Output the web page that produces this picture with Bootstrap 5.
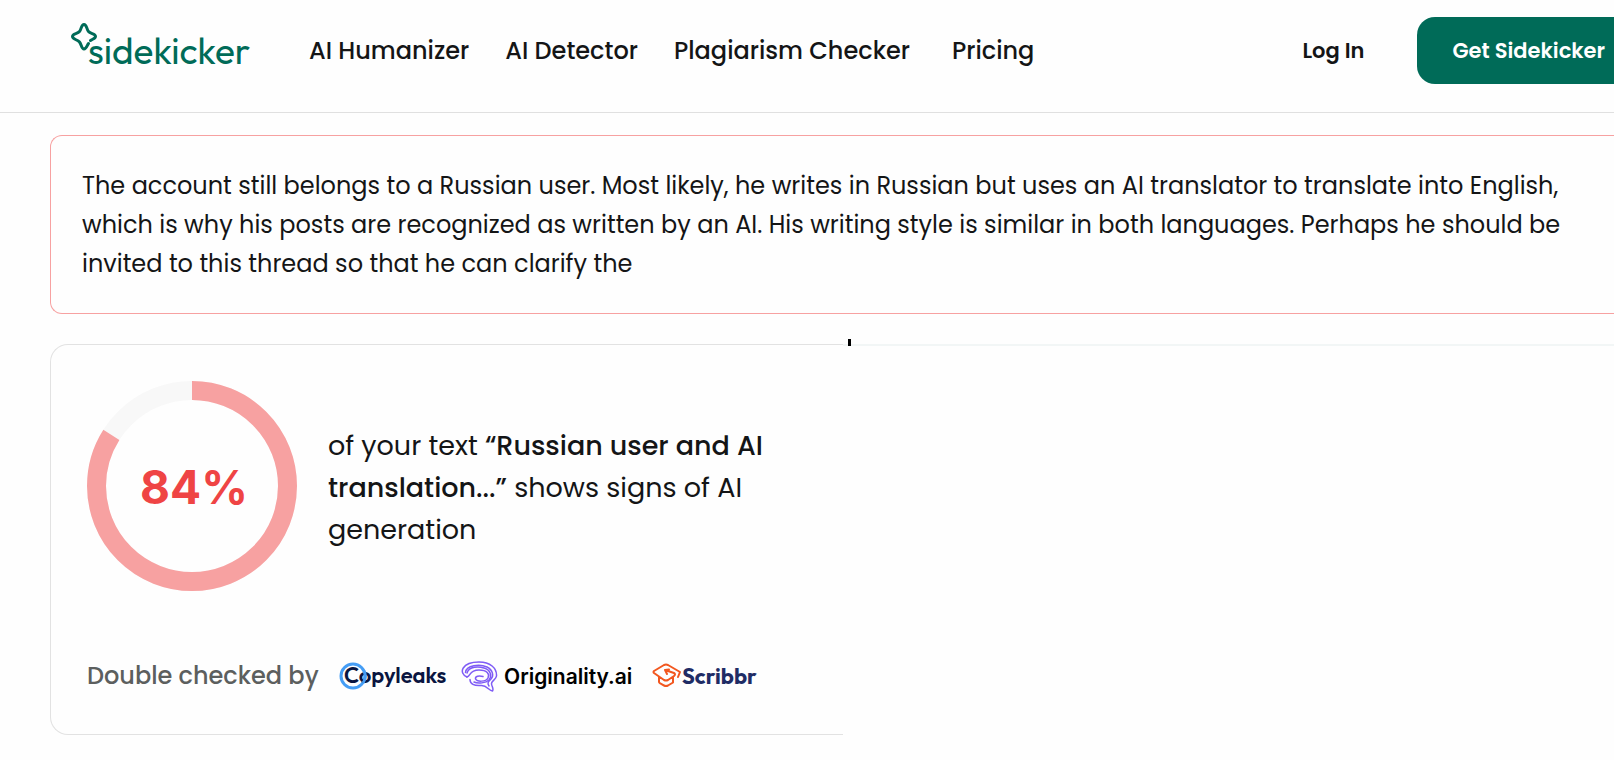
<!DOCTYPE html>
<html lang="en">
<head>
<meta charset="utf-8">
<meta name="viewport" content="width=device-width, initial-scale=1">
<title>Sidekicker AI Detector</title>
<link href="https://cdn.jsdelivr.net/npm/bootstrap@5.3.0/dist/css/bootstrap.min.css" rel="stylesheet">
<style>
  body { font-family: Poppins, Inter, sans-serif; color: #141516; background: #fefefe; overflow-x: hidden; }
  .site-header { min-height: 113px; border-bottom: 1px solid #e0e0e0; padding: 17px 0 28px 71px; }
  .brand { color: #006b58; width: 238px; font-family: Outfit, Poppins, sans-serif; font-size: 37px; line-height: 40px; text-decoration: none; }
  .brand svg { width: 26px; height: 28px; margin: -8px -9px 0 0; }
  .main-nav { gap: 36px; }
  .main-nav a { color: #141516; font-size: 24px; line-height: 36px; font-weight: 500; text-decoration: none; white-space: nowrap; }
  .main-nav .plans { margin-left: 6px; }
  .login { color: #141516; font-size: 21px; font-weight: 600; text-decoration: none; margin-right: 53px; white-space: nowrap; }
  .btn-get { background: #006b58; color: #fff; font-size: 21px; font-weight: 600; line-height: 32px; padding: 18px 9px 17px 35px; border: 0; border-radius: 18px 0 0 18px; white-space: nowrap; }
  .btn-get:hover { background: #005a4a; color: #fff; }
  .page-body { padding: 22px 0 24px 50px; }
  .sample { border: 1px solid #f7a1a1; border-right: 0; border-radius: 12px 0 0 12px; padding: 30px 48px 30px 31px; font-size: 24px; line-height: 39px; }
  .results { margin-top: 30px; }
  .score-panel { flex: 0 0 50.7%; min-height: 391px; border: 1px solid #e2e2e2; border-right: 0; border-radius: 18px 0 0 18px; padding: 36px 36px 40px; }
  .detail-panel { border-top: 2px solid #f2f6f6; position: relative; }
  .caret { position: absolute; left: 5px; top: -7px; width: 3px; height: 7px; background: #000; }
  .ring { width: 210px; height: 210px; flex: none; }
  .ring text { font-family: Inter, sans-serif; font-size: 46px; font-weight: 700; fill: #ef4444; }
  .verdict { font-size: 27px; line-height: 42px; max-width: 450px; margin-left: 31px; padding-top: 4px; }
  .verdict b { font-weight: 500; }
  .checked { color: #5c5f5e; font-size: 24px; font-weight: 500; line-height: 36px; width: 238px; white-space: nowrap; }
  .partner svg { display: block; }
  .partners { gap: 13px; }
</style>
</head>
<body>
<header class="site-header d-flex align-items-center">
  <a class="brand d-flex align-items-center" href="#">
    <svg class="align-self-start" viewBox="0 0 26 28" fill="none" stroke="#006b58" stroke-width="3" stroke-linejoin="round" stroke-linecap="round" aria-hidden="true"><path d="M17.500 20.500C16 22.500 15.500 26 13 26C10.500 26 10.500 21.500 8.500 19C6.500 16.500 1.500 16.500 1.500 13.500C1.500 10.500 6.500 11 8.500 8.500C10.500 6.500 10 1.500 13 1.500C16 1.500 15.500 6.500 17.500 8.500C19.500 11 24.500 10.500 24.500 13.500C24.500 15.500 21.500 16 19.500 17.500"/></svg>
    <span>sidekicker</span>
  </a>
  <nav class="main-nav d-flex">
    <a href="#">AI Humanizer</a>
    <a href="#">AI Detector</a>
    <a href="#">Plagiarism Checker</a>
    <a class="plans" href="#">Pricing</a>
  </nav>
  <div class="d-flex align-items-center ms-auto">
    <a class="login" href="#">Log In</a>
    <button class="btn btn-get" type="button">Get Sidekicker</button>
  </div>
</header>
<main class="page-body">
  <p class="sample mb-0">The account still belongs to a Russian user. Most likely, he writes in Russian but uses an AI translator to translate into English, which is why his posts are recognized as written by an AI. His writing style is similar in both languages. Perhaps he should be invited to this thread so that he can clarify the</p>
  <div class="results d-flex">
    <section class="score-panel d-flex flex-column justify-content-between">
      <div class="d-flex align-items-center">
        <svg class="ring" viewBox="0 0 210 210" role="img" aria-label="84%">
          <circle cx="105" cy="105" r="95.500" fill="none" stroke="#f8f8f8" stroke-width="19"/>
          <circle cx="105" cy="105" r="95.500" fill="none" stroke="#f7a1a1" stroke-width="19" pathLength="100" stroke-dasharray="84 16" transform="rotate(-90 105 105)"/>
          <text x="107" y="123" text-anchor="middle">84%</text>
        </svg>
        <p class="verdict mb-0">of your text <b>“Russian user and AI translation...”</b> shows signs of AI generation</p>
      </div>
      <div class="partners d-flex align-items-center">
        <span class="checked">Double checked by</span>
        <span class="partner"><svg width="110" height="36" viewBox="0 0 110 36" role="img" aria-label="Copyleaks">
          <circle cx="15" cy="18" r="12" fill="none" stroke="#459df5" stroke-width="3"/>
          <text x="6" y="25" font-family="Outfit, Lato, sans-serif" font-size="22" font-weight="600" fill="#0a1540">Copyleaks</text>
          <path d="M26 13A12 12 0 0 1 25 25" fill="none" stroke="#459df5" stroke-width="3"/>
        </svg></span>
        <span class="partner"><svg width="174" height="36" viewBox="0 0 174 36" role="img" aria-label="Originality.ai">
          <g fill="none" stroke="#7f5cf5" stroke-width="1.500" stroke-linecap="round" stroke-linejoin="round">
            <path d="M6 19C-3 15 1 4 18 4C29 4 36 10 35.500 18C35 22 30 23 30.500 26C31 29 33 31 31.500 33C28 33 26 27 20 27.500C13 28 9 26 9 21.500"/>
            <path d="M6 19C10 18 8 12 18 12C26 12 29 16 27 20C25 24 16 24 14.500 21C14 18 18 17.500 22 18.500"/>
            <path d="M4.500 14.500C5 7 19 6 26 9C32 12 33 18 30 21C27 24 26 25 28 28"/>
            <path d="M6 15C8 8 18 8.500 23 10C30 12 31 18 28 22C25 25 17 26 13 24"/>
          </g>
          <text x="43" y="26" font-family="Inter, sans-serif" font-size="21" font-weight="600" fill="#000">Originality.ai</text>
        </svg></span>
        <span class="partner ms-1"><svg width="108" height="36" viewBox="0 0 108 36" role="img" aria-label="Scribbr">
          <path d="M26 19L28 14L16 7Q14 6 12 7L2 13Q1 14 2 15L12 22Q14 23 16 22L22 18Q24 16 22 15L13 12M7 19V24Q7 25 12 27.500Q14 28.500 16 27.500L21 24.500V19M13 12L17 11.500M13 12L15 16" fill="none" stroke="#f2571f" stroke-width="2" stroke-linecap="round" stroke-linejoin="round"/>
          <text x="30" y="26" font-family="Outfit, Lato, sans-serif" font-size="22" font-weight="700" fill="#1f2c65">Scribbr</text>
        </svg></span>
      </div>
    </section>
    <section class="detail-panel flex-grow-1"><span class="caret"></span></section>
  </div>
</main>
<script src="https://cdn.jsdelivr.net/npm/bootstrap@5.3.0/dist/js/bootstrap.bundle.min.js"></script>
</body>
</html>
